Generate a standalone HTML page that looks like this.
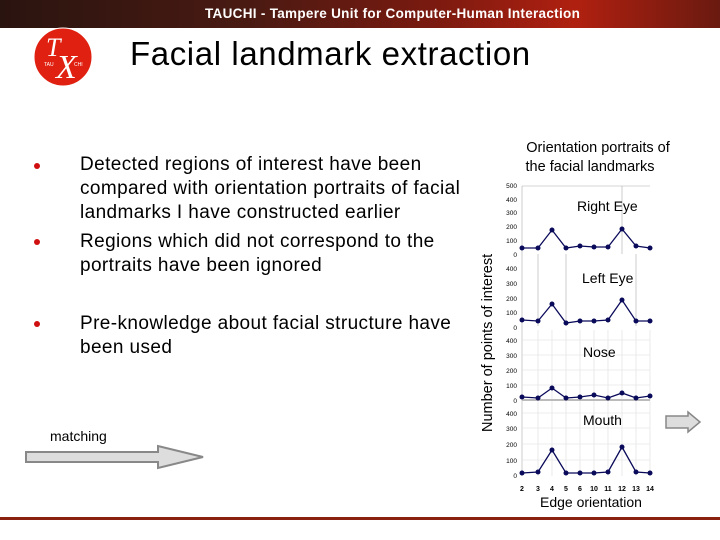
<!DOCTYPE html>
<html><head><meta charset="utf-8"><style>
body{margin:0;width:720px;height:540px;background:#fff;position:relative;overflow:hidden;font-family:"Liberation Sans",sans-serif}
.t{position:absolute;white-space:nowrap;color:#000}
.b{position:absolute;width:6px;height:6px;border-radius:50%;background:#d01010}
.bt{font-size:19px;line-height:24px;letter-spacing:0.4px}
</style></head><body>
<div style="position:absolute;left:0;top:0;width:720px;height:28px;background:linear-gradient(90deg,#2a1410 0%,#4a1a12 35%,#7a1a10 60%,#b02010 80%,#6a1a10 100%)"></div>
<div class="t" style="left:205px;top:6px;color:#fff;font-size:13.5px;font-weight:bold;letter-spacing:0.3px">TAUCHI - Tampere Unit for Computer-Human Interaction</div>
<svg style="position:absolute;left:0;top:0" width="720" height="540">
<circle cx="63" cy="57" r="29" fill="#e02010"/>
<circle cx="63" cy="57" r="29" fill="none" stroke="#fff" stroke-width="1"/>
<text x="46" y="56" font-family="Liberation Serif" font-size="26" fill="#fff" font-style="italic">T</text>
<text x="56" y="78" font-family="Liberation Serif" font-size="34" fill="#fff" font-style="italic">X</text>
<text x="44" y="66" font-size="5" fill="#fff">TAU</text><text x="74" y="66" font-size="5" fill="#fff">CHI</text>
<rect x="0" y="517" width="720" height="3" fill="#8a2010"/>
<g stroke="#aaa" stroke-width="0.6">
<line x1="522" y1="186" x2="522" y2="476"/>
<line x1="622" y1="186" x2="622" y2="254"/>
<line x1="538" y1="254" x2="538" y2="326"/><line x1="566" y1="254" x2="566" y2="326"/><line x1="636" y1="254" x2="636" y2="326"/>
<line x1="522" y1="186" x2="650" y2="186"/>
</g>
<g stroke="#ddd" stroke-width="0.6">
<line x1="538" y1="330" x2="538" y2="476"/><line x1="552" y1="330" x2="552" y2="476"/><line x1="566" y1="330" x2="566" y2="476"/><line x1="580" y1="330" x2="580" y2="476"/><line x1="594" y1="330" x2="594" y2="476"/><line x1="608" y1="330" x2="608" y2="476"/><line x1="622" y1="330" x2="622" y2="476"/><line x1="636" y1="330" x2="636" y2="476"/><line x1="650" y1="330" x2="650" y2="476"/>
<line x1="522" y1="340" x2="650" y2="340"/><line x1="522" y1="355" x2="650" y2="355"/><line x1="522" y1="370" x2="650" y2="370"/><line x1="522" y1="385" x2="650" y2="385"/>
<line x1="522" y1="413" x2="650" y2="413"/><line x1="522" y1="428" x2="650" y2="428"/><line x1="522" y1="444" x2="650" y2="444"/><line x1="522" y1="460" x2="650" y2="460"/>
</g>
<line x1="522" y1="400" x2="650" y2="400" stroke="#bbb" stroke-width="2"/>
<g fill="none" stroke="#0a0a5a" stroke-width="1.3">
<polyline points="522,248 538,248 552,230 566,248 580,246 594,247 608,247 622,229 636,246 650,248"/>
<polyline points="522,320 538,321 552,304 566,323 580,321 594,321 608,320 622,300 636,321 650,321"/>
<polyline points="522,397 538,398 552,388 566,398 580,397 594,395 608,398 622,393 636,398 650,396"/>
<polyline points="522,473 538,472 552,450 566,473 580,473 594,473 608,472 622,447 636,472 650,473"/>
</g>
<g fill="#0a0a5a">
<circle cx="522" cy="248" r="2.5"/><circle cx="538" cy="248" r="2.5"/><circle cx="552" cy="230" r="2.5"/><circle cx="566" cy="248" r="2.5"/><circle cx="580" cy="246" r="2.5"/><circle cx="594" cy="247" r="2.5"/><circle cx="608" cy="247" r="2.5"/><circle cx="622" cy="229" r="2.5"/><circle cx="636" cy="246" r="2.5"/><circle cx="650" cy="248" r="2.5"/>
<circle cx="522" cy="320" r="2.5"/><circle cx="538" cy="321" r="2.5"/><circle cx="552" cy="304" r="2.5"/><circle cx="566" cy="323" r="2.5"/><circle cx="580" cy="321" r="2.5"/><circle cx="594" cy="321" r="2.5"/><circle cx="608" cy="320" r="2.5"/><circle cx="622" cy="300" r="2.5"/><circle cx="636" cy="321" r="2.5"/><circle cx="650" cy="321" r="2.5"/>
<circle cx="522" cy="397" r="2.5"/><circle cx="538" cy="398" r="2.5"/><circle cx="552" cy="388" r="2.5"/><circle cx="566" cy="398" r="2.5"/><circle cx="580" cy="397" r="2.5"/><circle cx="594" cy="395" r="2.5"/><circle cx="608" cy="398" r="2.5"/><circle cx="622" cy="393" r="2.5"/><circle cx="636" cy="398" r="2.5"/><circle cx="650" cy="396" r="2.5"/>
<circle cx="522" cy="473" r="2.5"/><circle cx="538" cy="472" r="2.5"/><circle cx="552" cy="450" r="2.5"/><circle cx="566" cy="473" r="2.5"/><circle cx="580" cy="473" r="2.5"/><circle cx="594" cy="473" r="2.5"/><circle cx="608" cy="472" r="2.5"/><circle cx="622" cy="447" r="2.5"/><circle cx="636" cy="472" r="2.5"/><circle cx="650" cy="473" r="2.5"/>
</g>
<g font-size="6.5" fill="#000" text-anchor="end">
<text x="517" y="188">500</text><text x="517" y="202">400</text><text x="517" y="215">300</text><text x="517" y="229">200</text><text x="517" y="243">100</text><text x="517" y="257">0</text>
<text x="517" y="271">400</text><text x="517" y="286">300</text><text x="517" y="301">200</text><text x="517" y="315">100</text><text x="517" y="330">0</text>
<text x="517" y="343">400</text><text x="517" y="358">300</text><text x="517" y="373">200</text><text x="517" y="388">100</text><text x="517" y="403">0</text>
<text x="517" y="416">400</text><text x="517" y="431">300</text><text x="517" y="447">200</text><text x="517" y="463">100</text><text x="517" y="478">0</text>
</g>
<g font-size="7" font-weight="bold" fill="#000" text-anchor="middle">
<text x="522" y="491">2</text><text x="538" y="491">3</text><text x="552" y="491">4</text><text x="566" y="491">5</text><text x="580" y="491">6</text><text x="594" y="491">10</text><text x="608" y="491">11</text><text x="622" y="491">12</text><text x="636" y="491">13</text><text x="650" y="491">14</text>
</g>
<g font-size="14" fill="#000">
<text x="577" y="211">Right Eye</text><text x="582" y="283">Left Eye</text><text x="583" y="357">Nose</text><text x="583" y="425">Mouth</text>
<text x="540" y="507">Edge orientation</text>
<text x="492" y="432" transform="rotate(-90 492 432)" font-size="14.5">Number of points of interest</text>
<text x="598" y="152" text-anchor="middle" font-size="14.5">Orientation portraits of</text>
<text x="590" y="171" text-anchor="middle" font-size="14.5">the facial landmarks</text>
</g>
<polygon points="26,452 158,452 158,446 203,457 158,468 158,462 26,462" fill="#ddd" stroke="#888" stroke-width="2"/>
<polygon points="666,416 688,416 688,412 700,422 688,432 688,428 666,428" fill="#ddd" stroke="#888" stroke-width="1.5"/>
</svg>
<div class="t" style="left:130px;top:35px;font-size:33px;letter-spacing:0.6px">Facial landmark extraction</div>
<div class="b" style="left:34px;top:163px"></div>
<div class="b" style="left:34px;top:239px"></div>
<div class="b" style="left:34px;top:321px"></div>
<div class="t bt" style="left:80px;top:153px">Detected regions of interest have been<br>compared with orientation portraits of facial<br>landmarks I have constructed earlier</div>
<div class="t bt" style="left:80px;top:230px">Regions which did not correspond to the<br>portraits have been ignored</div>
<div class="t bt" style="left:80px;top:312px">Pre-knowledge about facial structure have<br>been used</div>
<div class="t" style="left:50px;top:428px;font-size:14px">matching</div>
</body></html>
